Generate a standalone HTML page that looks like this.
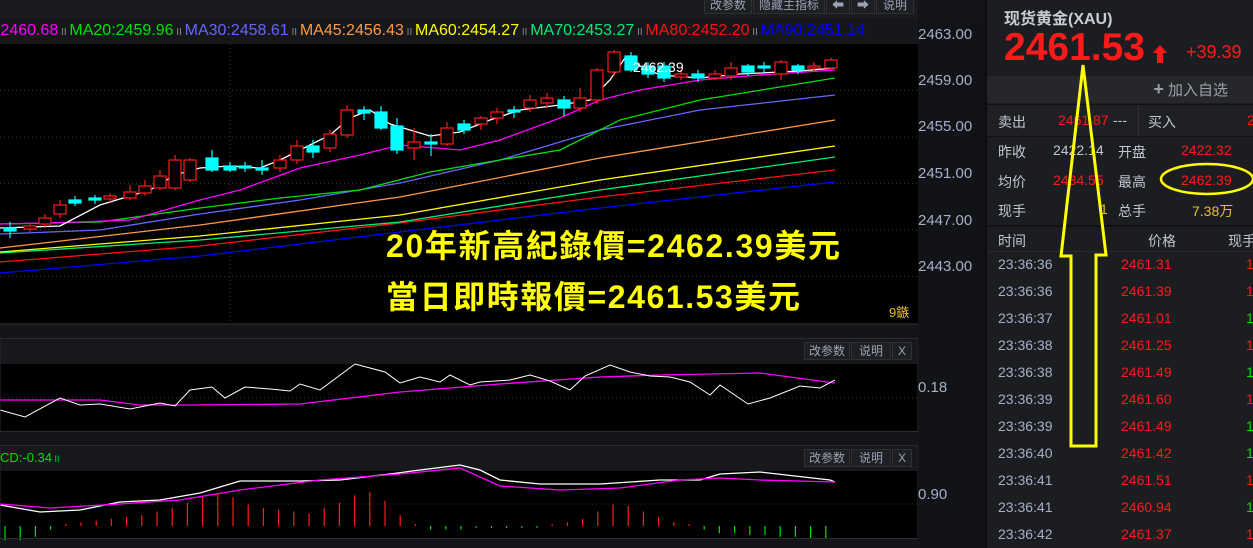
<!DOCTYPE html>
<html><head><meta charset="utf-8">
<style>
*{margin:0;padding:0;box-sizing:border-box}
body{width:1253px;height:548px;overflow:hidden;background:#141518;font-family:"Liberation Sans","Noto Sans CJK SC",sans-serif;position:relative}
.a{position:absolute;white-space:nowrap}
.btn{position:absolute;background:#1e1f23;border:1px solid #2e3036;color:#9aa3b5;font-size:12px;height:18px;line-height:16px;text-align:center}
.ax{position:absolute;left:918px;color:#a4b0c8;font-size:15px}
.r{position:absolute;font-size:14px;white-space:nowrap}
</style></head><body>
<div class="a" style="left:0;top:0;width:918px;height:18px;background:#1a1b1e"></div>
<div class="btn" style="left:704px;top:-4px;width:48px">改参数</div>
<div class="btn" style="left:753px;top:-4px;width:72px">隐藏主指标</div>
<div class="btn" style="left:826px;top:-4px;width:24px">⬅</div>
<div class="btn" style="left:851px;top:-4px;width:24px">➡</div>
<div class="btn" style="left:876px;top:-4px;width:38px">说明</div>
<div class="a" style="left:0;top:18px;width:918px;height:26px;background:#16171a;font-size:16px;line-height:26px;overflow:hidden">
<span style="color:#ff00ff;margin-left:-4px">:2460.68</span><span style="color:#888;font-size:10px"> II </span>
<span style="color:#00e000">MA20:2459.96</span><span style="color:#888;font-size:10px"> II </span>
<span style="color:#6666ff">MA30:2458.61</span><span style="color:#888;font-size:10px"> II </span>
<span style="color:#ff9944">MA45:2456.43</span><span style="color:#888;font-size:10px"> II </span>
<span style="color:#ffff00">MA60:2454.27</span><span style="color:#888;font-size:10px"> II </span>
<span style="color:#00ee77">MA70:2453.27</span><span style="color:#888;font-size:10px"> II </span>
<span style="color:#ff1111">MA80:2452.20</span><span style="color:#888;font-size:10px"> II </span>
<span style="color:#0000ff">MA90:2451.14</span></div>
<div class="a" style="left:918px;top:18px;width:67px;height:530px;background:#121316"></div>
<div class="ax" style="top:26px">2463.00</div>
<div class="ax" style="top:72px">2459.00</div>
<div class="ax" style="top:118px">2455.00</div>
<div class="ax" style="top:165px">2451.00</div>
<div class="ax" style="top:212px">2447.00</div>
<div class="ax" style="top:258px">2443.00</div>
<div class="ax" style="top:379px">0.18</div>
<div class="ax" style="top:486px">0.90</div>
<svg class="a" style="left:0;top:0" width="918" height="548">
<rect x="0" y="44" width="918" height="280" fill="#000"/>
<g stroke="#333" stroke-dasharray="1,3" stroke-width="1">
<line x1="0" y1="90.5" x2="918" y2="90.5"/><line x1="0" y1="137" x2="918" y2="137"/><line x1="0" y1="183.5" x2="918" y2="183.5"/><line x1="0" y1="230" x2="918" y2="230"/><line x1="0" y1="276.5" x2="918" y2="276.5"/><line x1="230" y1="44" x2="230" y2="324"/>
</g>
<line x1="0" y1="324" x2="918" y2="324" stroke="#333"/>
<g fill="none" stroke-width="1.3">
<polyline stroke="#0000ff" points="0,273 200,256 400,232 600,208 835,182"/>
<polyline stroke="#ff1111" points="0,262 200,246 400,223 600,197 835,170"/>
<polyline stroke="#00ee77" points="0,253 200,240 400,222 600,190 835,157"/>
<polyline stroke="#ffff00" points="0,252 200,236 400,215 600,180 835,146"/>
<polyline stroke="#ff9944" points="0,248 200,225 400,197 600,158 835,120"/>
<polyline stroke="#6666ff" points="0,234 100,230 200,214 300,200 400,183 500,160 600,130 700,110 835,95"/>
<polyline stroke="#00e000" points="0,224 100,222 200,208 280,198 360,190 430,172 500,160 560,150 620,120 700,100 835,78"/>
<polyline stroke="#ff00ff" points="0,224 80,222 130,220 200,200 240,190 300,168 360,155 400,145 460,150 500,140 560,118 600,100 640,90 700,80 760,75 835,70"/>
<polyline stroke="#fff" points="0,228 60,226 100,205 150,190 175,175 200,168 230,166 260,168 280,160 300,150 330,135 350,118 370,110 390,124 410,130 430,136 460,132 490,120 520,110 560,105 590,100 610,80 625,58 640,66 660,75 700,78 740,74 800,71 835,68"/>
</g>
<g id="c" stroke-width="1.2"></g>
<text x="633" y="72" fill="#fff" font-size="14" font-family="Liberation Sans">2462.39</text>
<text x="386" y="257" fill="#ffff00" font-size="32" font-weight="bold" font-family="Liberation Sans,Noto Sans CJK TC,sans-serif" textLength="454">20年新高紀錄價=2462.39美元</text>
<text x="386" y="308" fill="#ffff00" font-size="32" font-weight="bold" font-family="Liberation Sans,Noto Sans CJK TC,sans-serif" textLength="414">當日即時報價=2461.53美元</text>
<text x="889" y="317" fill="#e8c020" font-size="13" font-family="Liberation Sans,Noto Sans CJK SC,sans-serif">9鏃</text>
<rect x="0" y="339" width="918" height="25" fill="#17181b"/>
<rect x="0" y="364" width="918" height="67" fill="#000"/>
<line x1="0" y1="398" x2="918" y2="398" stroke="#333" stroke-dasharray="1,3"/>
<polyline fill="none" stroke="#ff00ff" stroke-width="1.3" points="0,400 100,400 140,405 190,405 300,404 400,392 500,384 600,377 660,375 760,373 835,383"/>
<polyline fill="none" stroke="#fff" stroke-width="1" points="0,410 25,417 60,398 80,405 100,404 130,409 160,403 175,406 190,390 212,387 225,398 245,387 270,389 290,391 300,384 320,390 355,364 385,372 400,383 420,377 440,382 450,375 470,385 480,382 510,380 530,375 550,381 570,390 585,376 610,365 630,372 650,376 670,377 690,382 710,395 720,385 748,404 770,398 800,386 820,388 835,380"/>
<rect x="0" y="446" width="918" height="25" fill="#17181b"/>
<rect x="0" y="471" width="918" height="67" fill="#000"/>
<line x1="0" y1="504" x2="918" y2="504" stroke="#333" stroke-dasharray="1,3"/>
<polyline fill="none" stroke="#fff" stroke-width="1.3" points="0,505 40,512 80,510 120,502 160,500 200,493 240,481 300,481 340,480 390,474 420,470 460,465 480,470 500,480 540,484 600,484 660,480 700,480 720,474 760,472 830,480 835,482"/>
<polyline fill="none" stroke="#ff00ff" stroke-width="1.3" points="0,504 50,508 120,504 180,500 240,490 320,480 400,474 460,468 500,486 560,490 620,488 680,480 720,478 760,480 835,482"/>
<g stroke-width="1.2" id="h"></g>
<rect x="0" y="338.5" width="918" height="93" fill="none" stroke="#2a2c31"/>
<rect x="0" y="445.5" width="918" height="93" fill="none" stroke="#2a2c31"/>
</svg>
<div class="btn" style="left:804px;top:342px;width:46px">改参数</div>
<div class="btn" style="left:851px;top:342px;width:40px">说明</div>
<div class="btn" style="left:892px;top:342px;width:20px">X</div>
<div class="btn" style="left:804px;top:449px;width:46px">改参数</div>
<div class="btn" style="left:851px;top:449px;width:40px">说明</div>
<div class="btn" style="left:892px;top:449px;width:20px">X</div>
<div class="a" style="left:0;top:450px;color:#00e000;font-size:13px">CD:-0.34<span style="font-size:9px"> II</span></div>
<div class="a" style="left:985px;top:0;width:268px;height:548px;background:#1c1d21;border-left:2px solid #0c0c0e"></div>
<div class="a" style="left:1004px;top:5px;color:#c8ccd4;font-size:16px;font-weight:bold">现货黄金(XAU)</div>
<div class="a" style="left:1004px;top:26px;color:#ff1a1a;font-size:39px;font-weight:bold">2461.53</div>
<svg class="a" style="left:1153px;top:45px" width="14" height="18"><polygon points="7,0 14,8 10,8 10,18 4,18 4,8 0,8" fill="#ff1a1a"/></svg>
<div class="a" style="left:1186px;top:42px;color:#ff1a1a;font-size:18px">+39.39</div>
<div class="a" style="left:987px;top:76px;width:266px;height:27px;background:#26272b;color:#9aa0aa;font-size:15px;line-height:27px;text-align:right;padding-right:25px"><b style="font-size:18px">+</b> 加入自选</div>
<div class="a" style="left:987px;top:104px;width:266px;height:1px;background:#111"></div>
<div class="a" style="left:987px;top:105px;width:266px;height:32px;background:#1f2024;border-bottom:1px solid #111"></div>
<div class="a" style="left:1138px;top:105px;width:1px;height:32px;background:#333"></div>
<div class="r" style="left:998px;top:112px;color:#c0c6d2">卖出</div>
<div class="r" style="left:1058px;top:112px;color:#ff1a1a">2461.87</div>
<div class="r" style="left:1113px;top:112px;color:#c0c6d2">---</div>
<div class="r" style="left:1148px;top:112px;color:#c0c6d2">买入</div>
<div class="r" style="left:1247px;top:112px;color:#ff1a1a">2</div>
<div class="r" style="left:998px;top:142px;color:#c0c6d2">昨收</div>
<div class="r" style="left:1053px;top:142px;color:#c0c6d2">2422.14</div>
<div class="r" style="left:1118px;top:142px;color:#c0c6d2">开盘</div>
<div class="r" style="left:1181px;top:142px;color:#ff1a1a">2422.32</div>
<div class="r" style="left:998px;top:172px;color:#c0c6d2">均价</div>
<div class="r" style="left:1053px;top:172px;color:#ff1a1a">2434.55</div>
<div class="r" style="left:1118px;top:172px;color:#c0c6d2">最高</div>
<div class="r" style="left:1181px;top:172px;color:#ff1a1a">2462.39</div>
<div class="r" style="left:998px;top:201px;color:#c0c6d2">现手</div>
<div class="r" style="left:1100px;top:201px;color:#e8c020">1</div>
<div class="r" style="left:1118px;top:201px;color:#c0c6d2">总手</div>
<div class="r" style="left:1192px;top:201px;color:#e8c020">7.38万</div>
<div class="a" style="left:987px;top:225px;width:266px;height:2px;background:#111"></div>
<div class="r" style="left:998px;top:231px;color:#c0c6d2">时间</div>
<div class="r" style="left:1148px;top:231px;color:#c0c6d2">价格</div>
<div class="r" style="left:1228px;top:231px;color:#c0c6d2">现手</div>
<div class="a" style="left:987px;top:251px;width:266px;height:1px;background:#2a2b30"></div>
<div id="list"></div>
<svg class="a" style="left:0;top:0" width="1253" height="548">
<ellipse cx="1207" cy="179" rx="46" ry="15" fill="none" stroke="#ffff00" stroke-width="2.5"/>
<polygon points="1083,65 1106,255 1096,255 1096,446 1071,446 1071,256 1061,256" fill="none" stroke="#ffff00" stroke-width="3" stroke-linejoin="miter"/>
</svg>
<script>
var C=[[10,228,231,222,238,0],[30,226,229,223,232,1],[45,218,224,214,228,1],[60,205,214,200,218,1],[75,200,203,196,206,0],[95,198,200,195,204,0],[110,196,199,193,202,1],[130,192,198,185,200,1],[145,186,193,180,196,1],[160,176,188,170,190,1],[175,160,188,155,190,1],[190,160,180,158,182,1],[212,158,170,150,172,0],[230,166,170,162,172,0],[245,166,168,162,172,0],[262,168,170,160,175,0],[280,160,168,155,172,1],[297,146,160,140,164,1],[313,146,152,140,158,0],[330,134,148,130,152,1],[347,110,135,105,138,1],[364,110,113,106,120,0],[381,112,128,106,130,0],[397,126,150,118,154,0],[414,142,148,128,160,1],[431,142,144,134,156,0],[447,128,144,122,146,1],[464,124,130,120,134,0],[481,118,124,116,130,1],[497,112,118,108,124,1],[514,110,112,106,118,0],[530,100,108,95,112,1],[547,98,103,93,108,1],[564,100,108,96,116,0],[580,98,108,88,112,1],[597,70,100,68,104,1],[614,52,72,50,76,1],[631,56,70,52,72,0],[648,66,74,62,78,0],[664,66,78,62,82,0],[681,74,77,70,80,1],[698,74,78,70,82,0],[715,74,78,70,80,1],[731,68,76,62,80,1],[748,66,72,64,76,0],[764,66,68,62,74,0],[781,62,74,60,80,1],[798,66,70,64,74,0],[814,66,68,62,72,1],[831,60,68,58,70,1]];
var s='';C.forEach(function(c){var col=c[5]?'#ff1a1a':'#00ffff';s+='<line x1="'+c[0]+'" x2="'+c[0]+'" y1="'+c[3]+'" y2="'+c[4]+'" stroke="'+col+'"/>';s+='<rect x="'+(c[0]-6)+'" y="'+c[1]+'" width="12" height="'+Math.max(1,c[2]-c[1])+'" fill="'+(c[5]?'#000':col)+'" stroke="'+col+'"/>';});
document.getElementById('c').innerHTML=s;
var h='',v=[-8,-8,-6,-2,1,2,3,4,5,6,8,10,13,16,18,16,12,10,9,8,7,10,13,17,19,14,6,1,-2,-2,-2,-1,-1,-1,-1,-1,1,2,4,8,12,11,8,5,2,1,-2,-4,-4,-5,-5,-6,-6,-7,-7];
v.forEach(function(x,i){var px=5+i*15.2;var col=x>0?'#ff1a1a':'#00e000';var y0=526,y1=526-x*1.8;h+='<line x1="'+px+'" x2="'+px+'" y1="'+Math.min(y0,y1)+'" y2="'+Math.max(y0,y1)+'" stroke="'+col+'"/>';});
document.getElementById('h').innerHTML=h;
var T=['23:36:36','23:36:36','23:36:37','23:36:38','23:36:38','23:36:39','23:36:39','23:36:40','23:36:41','23:36:41','23:36:42'];
var P=['2461.31','2461.39','2461.01','2461.25','2461.49','2461.60','2461.49','2461.42','2461.51','2460.94','2461.37'];
var G=[0,0,1,0,1,0,1,1,0,1,0],l='';
T.forEach(function(t,i){var y=256+i*27;l+='<div class="r" style="left:998px;top:'+y+'px;color:#a4b0c8">'+t+'</div><div class="r" style="left:1121px;top:'+y+'px;color:#ff1a1a">'+P[i]+'</div><div class="r" style="left:1246px;top:'+y+'px;color:'+(G[i]?'#00e000':'#ff1a1a')+'">1</div>';});
document.getElementById('list').innerHTML=l;
</script>
</body></html>
